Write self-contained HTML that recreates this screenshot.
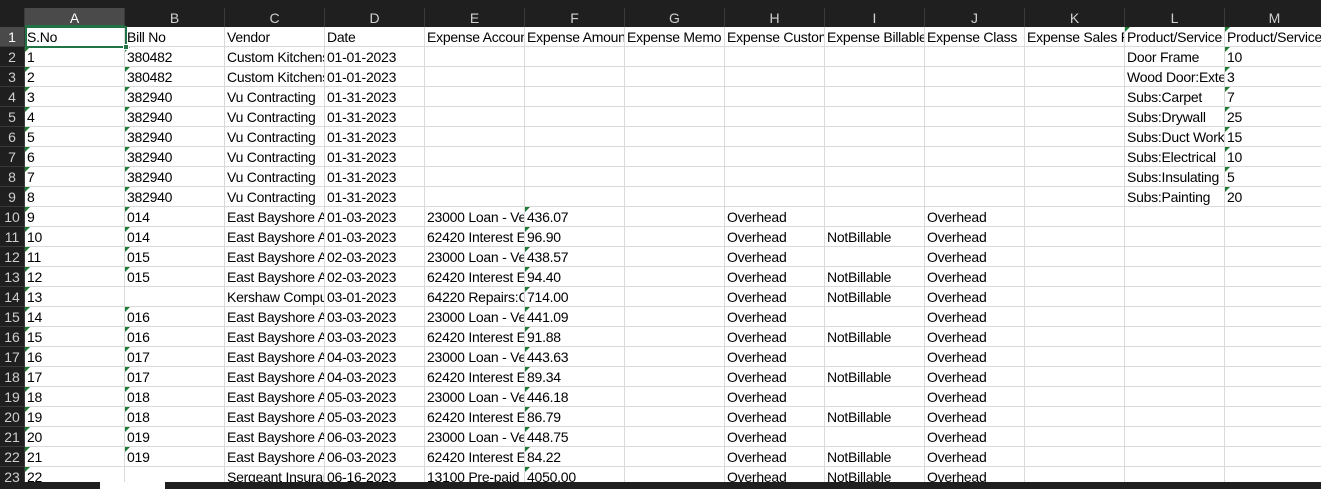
<!DOCTYPE html>
<html><head><meta charset="utf-8"><style>
*{margin:0;padding:0;box-sizing:border-box}
body{width:1321px;height:489px;overflow:hidden;background:#fff;font-family:"Liberation Sans",sans-serif;position:relative}
.top{position:absolute;left:0;top:0;width:1321px;height:8px;background:#1f1f1f}
.hdr{position:absolute;top:8px;left:0;height:19px;width:1321px;background:#1f1f1f;display:flex}
.hdr div{width:100px;flex:none;color:#cfcfcf;font-size:14px;text-align:center;line-height:20px;border-right:1px solid #3a3a3a}
.hdr .corner{width:25px;position:relative}
.hdr .sel{background:#4a4a4a;color:#fff;border-bottom:2px solid #217346}
.grid{position:absolute;top:27px;left:0}
.r{display:flex;height:20px}
.r div{width:100px;flex:none;height:20px;border-right:1px solid #dadada;border-bottom:1px solid #dadada;font-size:14px;line-height:21px;padding-left:2px;white-space:nowrap;overflow:hidden;color:#000;position:relative;letter-spacing:-0.25px}
.r div.n{width:25px;background:#1f1f1f;color:#cfcfcf;text-align:center;padding:0;border-right:1px solid #3a3a3a;border-bottom:1px solid #3a3a3a;letter-spacing:0}
.r div.n1{background:#4a4a4a;color:#fff}
.t::before{content:"";position:absolute;left:0;top:0;border-top:5px solid #1e7b34;border-right:5px solid transparent}
.bot{position:absolute;left:0;top:482px;width:1321px;height:7px;background:#1f1f1f}
.bot i{position:absolute;left:100px;top:0;width:65px;height:7px;background:#fff}
.selbox{position:absolute;left:25px;top:26px;width:102px;height:22px;border:2px solid #217346}
.handle{position:absolute;left:123px;top:44px;width:6px;height:6px;background:#217346;border:1px solid #fff}
</style></head><body>
<div class="top"></div>
<div class="hdr"><div class="corner"></div><div class="sel">A</div><div>B</div><div>C</div><div>D</div><div>E</div><div>F</div><div>G</div><div>H</div><div>I</div><div>J</div><div>K</div><div>L</div><div>M</div></div>
<div class="grid">
<div class="r"><div class="n n1">1</div><div>S.No</div><div>Bill No</div><div>Vendor</div><div>Date</div><div>Expense Account</div><div>Expense Amount</div><div>Expense Memo</div><div>Expense Customer</div><div>Expense Billable</div><div>Expense Class</div><div>Expense Sales Rep</div><div class="t">Product/Service</div><div class="t">Product/Service</div></div>
<div class="r"><div class="n">2</div><div class="t">1</div><div class="t">380482</div><div>Custom Kitchens</div><div>01-01-2023</div><div></div><div></div><div></div><div></div><div></div><div></div><div></div><div>Door Frame</div><div class="t">10</div></div>
<div class="r"><div class="n">3</div><div class="t">2</div><div class="t">380482</div><div>Custom Kitchens</div><div>01-01-2023</div><div></div><div></div><div></div><div></div><div></div><div></div><div></div><div>Wood Door:Exterior</div><div class="t">3</div></div>
<div class="r"><div class="n">4</div><div class="t">3</div><div class="t">382940</div><div>Vu Contracting</div><div>01-31-2023</div><div></div><div></div><div></div><div></div><div></div><div></div><div></div><div>Subs:Carpet</div><div class="t">7</div></div>
<div class="r"><div class="n">5</div><div class="t">4</div><div class="t">382940</div><div>Vu Contracting</div><div>01-31-2023</div><div></div><div></div><div></div><div></div><div></div><div></div><div></div><div>Subs:Drywall</div><div class="t">25</div></div>
<div class="r"><div class="n">6</div><div class="t">5</div><div class="t">382940</div><div>Vu Contracting</div><div>01-31-2023</div><div></div><div></div><div></div><div></div><div></div><div></div><div></div><div>Subs:Duct Work</div><div class="t">15</div></div>
<div class="r"><div class="n">7</div><div class="t">6</div><div class="t">382940</div><div>Vu Contracting</div><div>01-31-2023</div><div></div><div></div><div></div><div></div><div></div><div></div><div></div><div>Subs:Electrical</div><div class="t">10</div></div>
<div class="r"><div class="n">8</div><div class="t">7</div><div class="t">382940</div><div>Vu Contracting</div><div>01-31-2023</div><div></div><div></div><div></div><div></div><div></div><div></div><div></div><div>Subs:Insulating</div><div class="t">5</div></div>
<div class="r"><div class="n">9</div><div class="t">8</div><div class="t">382940</div><div>Vu Contracting</div><div>01-31-2023</div><div></div><div></div><div></div><div></div><div></div><div></div><div></div><div>Subs:Painting</div><div class="t">20</div></div>
<div class="r"><div class="n">10</div><div class="t">9</div><div class="t">014</div><div>East Bayshore Auto</div><div>01-03-2023</div><div>23000 Loan - Vehicle</div><div class="t">436.07</div><div></div><div>Overhead</div><div></div><div>Overhead</div><div></div><div></div><div></div></div>
<div class="r"><div class="n">11</div><div class="t">10</div><div class="t">014</div><div>East Bayshore Auto</div><div>01-03-2023</div><div>62420 Interest Exp</div><div class="t">96.90</div><div></div><div>Overhead</div><div>NotBillable</div><div>Overhead</div><div></div><div></div><div></div></div>
<div class="r"><div class="n">12</div><div class="t">11</div><div class="t">015</div><div>East Bayshore Auto</div><div>02-03-2023</div><div>23000 Loan - Vehicle</div><div class="t">438.57</div><div></div><div>Overhead</div><div></div><div>Overhead</div><div></div><div></div><div></div></div>
<div class="r"><div class="n">13</div><div class="t">12</div><div class="t">015</div><div>East Bayshore Auto</div><div>02-03-2023</div><div>62420 Interest Exp</div><div class="t">94.40</div><div></div><div>Overhead</div><div>NotBillable</div><div>Overhead</div><div></div><div></div><div></div></div>
<div class="r"><div class="n">14</div><div class="t">13</div><div></div><div>Kershaw Computer</div><div>03-01-2023</div><div>64220 Repairs:Comp</div><div class="t">714.00</div><div></div><div>Overhead</div><div>NotBillable</div><div>Overhead</div><div></div><div></div><div></div></div>
<div class="r"><div class="n">15</div><div class="t">14</div><div class="t">016</div><div>East Bayshore Auto</div><div>03-03-2023</div><div>23000 Loan - Vehicle</div><div class="t">441.09</div><div></div><div>Overhead</div><div></div><div>Overhead</div><div></div><div></div><div></div></div>
<div class="r"><div class="n">16</div><div class="t">15</div><div class="t">016</div><div>East Bayshore Auto</div><div>03-03-2023</div><div>62420 Interest Exp</div><div class="t">91.88</div><div></div><div>Overhead</div><div>NotBillable</div><div>Overhead</div><div></div><div></div><div></div></div>
<div class="r"><div class="n">17</div><div class="t">16</div><div class="t">017</div><div>East Bayshore Auto</div><div>04-03-2023</div><div>23000 Loan - Vehicle</div><div class="t">443.63</div><div></div><div>Overhead</div><div></div><div>Overhead</div><div></div><div></div><div></div></div>
<div class="r"><div class="n">18</div><div class="t">17</div><div class="t">017</div><div>East Bayshore Auto</div><div>04-03-2023</div><div>62420 Interest Exp</div><div class="t">89.34</div><div></div><div>Overhead</div><div>NotBillable</div><div>Overhead</div><div></div><div></div><div></div></div>
<div class="r"><div class="n">19</div><div class="t">18</div><div class="t">018</div><div>East Bayshore Auto</div><div>05-03-2023</div><div>23000 Loan - Vehicle</div><div class="t">446.18</div><div></div><div>Overhead</div><div></div><div>Overhead</div><div></div><div></div><div></div></div>
<div class="r"><div class="n">20</div><div class="t">19</div><div class="t">018</div><div>East Bayshore Auto</div><div>05-03-2023</div><div>62420 Interest Exp</div><div class="t">86.79</div><div></div><div>Overhead</div><div>NotBillable</div><div>Overhead</div><div></div><div></div><div></div></div>
<div class="r"><div class="n">21</div><div class="t">20</div><div class="t">019</div><div>East Bayshore Auto</div><div>06-03-2023</div><div>23000 Loan - Vehicle</div><div class="t">448.75</div><div></div><div>Overhead</div><div></div><div>Overhead</div><div></div><div></div><div></div></div>
<div class="r"><div class="n">22</div><div class="t">21</div><div class="t">019</div><div>East Bayshore Auto</div><div>06-03-2023</div><div>62420 Interest Exp</div><div class="t">84.22</div><div></div><div>Overhead</div><div>NotBillable</div><div>Overhead</div><div></div><div></div><div></div></div>
<div class="r"><div class="n">23</div><div class="t">22</div><div></div><div>Sergeant Insurance</div><div>06-16-2023</div><div>13100 Pre-paid Ins</div><div class="t">4050.00</div><div></div><div>Overhead</div><div>NotBillable</div><div>Overhead</div><div></div><div></div><div></div></div>
</div>
<div class="selbox"></div><div class="handle"></div>
<div class="bot"><i></i></div>
</body></html>
